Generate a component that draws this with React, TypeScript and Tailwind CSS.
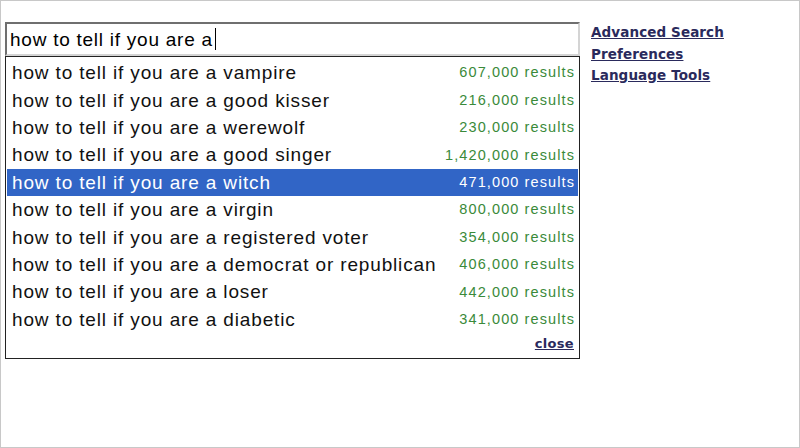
import React from 'react';

const suggestions = [
  { text: 'how to tell if you are a vampire', count: '607,000 results' },
  { text: 'how to tell if you are a good kisser', count: '216,000 results' },
  { text: 'how to tell if you are a werewolf', count: '230,000 results' },
  { text: 'how to tell if you are a good singer', count: '1,420,000 results' },
  { text: 'how to tell if you are a witch', count: '471,000 results', active: true },
  { text: 'how to tell if you are a virgin', count: '800,000 results' },
  { text: 'how to tell if you are a registered voter', count: '354,000 results' },
  { text: 'how to tell if you are a democrat or republican', count: '406,000 results' },
  { text: 'how to tell if you are a loser', count: '442,000 results' },
  { text: 'how to tell if you are a diabetic', count: '341,000 results' },
];

export default function App() {
  return (
    <div className="w-[800px] h-[448px] bg-white border border-[#c8c8c8] overflow-hidden">
      <div className="flex pl-[4px] pt-[21px]">
        {/* Search box + suggestions */}
        <div className="w-[575px]">
          <div className="h-[34px] border-2 border-t-[#6f6f6f] border-l-[#6f6f6f] border-r-[#d4d4d4] border-b-[#d4d4d4] bg-white flex items-center pl-[3px]">
            <span className="font-['Liberation_Sans',Arial,sans-serif] text-[19px] tracking-[0.75px] text-black leading-none">
              how to tell if you are a
            </span>
            <span className="ml-[2px] w-[1px] h-[22px] bg-black" />
          </div>
          <div className="border border-[#222] bg-white px-[1px] pt-[2px] pb-[3px]">
            {suggestions.map((s) => (
              <div
                key={s.text}
                className={`h-[27.4px] flex items-center justify-between pl-[5px] pr-[3px] ${
                  s.active ? 'bg-[#3165c6] text-white' : 'text-[#111]'
                }`}
              >
                <span className="font-['Liberation_Sans',Arial,sans-serif] text-[19px] tracking-[0.85px] leading-none">
                  {s.text}
                </span>
                <span
                  className={`font-['Liberation_Sans',Arial,sans-serif] text-[14.5px] tracking-[1.1px] leading-none ${
                    s.active ? 'text-white' : 'text-[#3a8a3a]'
                  }`}
                >
                  {s.count}
                </span>
              </div>
            ))}
            <div className="h-[22px] flex items-center justify-end pr-[4px]">
              <a className="font-['DejaVu_Sans',Verdana,sans-serif] text-[13px] font-bold text-[#2a2a5c] underline tracking-[0.3px] leading-none">
                close
              </a>
            </div>
          </div>
        </div>

        {/* Side links */}
        <div className="ml-[11px] flex flex-col gap-[5.5px] pt-[2px] font-['DejaVu_Sans',Verdana,sans-serif] text-[13.5px] font-bold text-[#2a2a5c] leading-[16px]">
          <a className="underline tracking-[0.1px]">Advanced Search</a>
          <a className="underline tracking-[0.1px]">Preferences</a>
          <a className="underline tracking-[0.1px]">Language Tools</a>
        </div>
      </div>
    </div>
  );
}
